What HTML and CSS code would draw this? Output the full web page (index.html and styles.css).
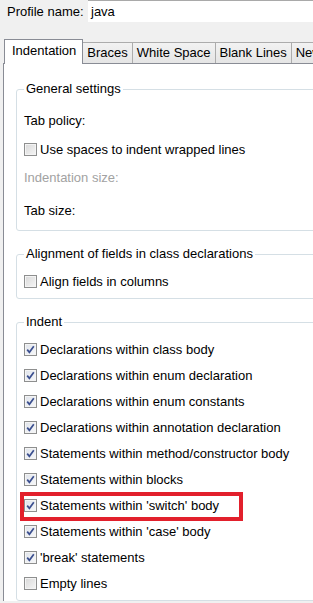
FILE: index.html
```html
<!DOCTYPE html>
<html>

<head>
  <title>Formatter Profile</title>
  <meta name="viewport" content="width=device-width,initial-scale=1">
  <link rel="stylesheet" href="styles.css">
</head>

<body>
  <div class="profile">
    <span class="profile__label">Profile name:</span>
    <span class="profile__input">java</span>
  </div>

  <div class="tabs">
    <span class="tab active">Indentation</span>
    <span class="tab">Braces</span>
    <span class="tab">White Space</span>
    <span class="tab">Blank Lines</span>
    <span class="tab">New Lines</span>
  </div>

  <div class="pane">
    <fieldset class="group group--general">
      <legend>General settings</legend>
      <div class="row row--policy">Tab policy:</div>
      <div class="row row--spaces"><span class="box"></span>Use spaces to indent wrapped lines</div>
      <div class="row row--size disabled">Indentation size:</div>
      <div class="row row--tabsize">Tab size:</div>
    </fieldset>

    <fieldset class="group group--align">
      <legend>Alignment of fields in class declarations</legend>
      <div class="row"><span class="box"></span>Align fields in columns</div>
    </fieldset>

    <fieldset class="group group--indent">
      <legend>Indent</legend>
      <div class="row"><span class="box checked"></span>Declarations within class body</div>
      <div class="row"><span class="box checked"></span>Declarations within enum declaration</div>
      <div class="row"><span class="box checked"></span>Declarations within enum constants</div>
      <div class="row"><span class="box checked"></span>Declarations within annotation declaration</div>
      <div class="row"><span class="box checked"></span>Statements within method/constructor body</div>
      <div class="row"><span class="box checked"></span>Statements within blocks</div>
      <div class="row marked"><span class="box checked"></span>Statements within 'switch' body</div>
      <div class="row"><span class="box checked"></span>Statements within 'case' body</div>
      <div class="row"><span class="box checked"></span>'break' statements</div>
      <div class="row"><span class="box"></span>Empty lines</div>
    </fieldset>
  </div>

  <script>
    // tick glyph for the checked boxes
    const tick = '<svg width="9" height="9" viewBox="0 0 9 9"><path d="M1.2 4.6 L3.4 7.3 L7.8 1.3" fill="none" stroke="#3b4f8f" stroke-width="1.7"/></svg>'
    document.querySelectorAll('.box.checked').forEach(function(box){
      box.innerHTML = tick
    })
  </script>
</body>

</html>
```

FILE: styles.css
```css
body {
  margin: 0;
  background: #f0f0f0;
  color: #000;
  font-family: 'Liberation Sans', Arial, sans-serif;
  font-size: 13px;
  overflow: hidden;
}

.profile {
  display: flex;
  height: 22px;
  align-items: stretch;
}

.profile__label {
  padding-left: 7px;
  width: 81px;
  line-height: 23px;
}

.profile__input {
  flex: 1;
  background: #fff;
  border-top: 1px solid #a9a9a9;
  padding-left: 3px;
  line-height: 21px;
}

.tabs {
  display: flex;
  align-items: flex-end;
  margin-top: 17px;
  padding-left: 4px;
  height: 24px;
  white-space: nowrap;
}

.tab {
  box-sizing: border-box;
  height: 21px;
  padding: 0 4px;
  line-height: 20px;
  border: 1px solid #acacac;
  border-bottom: none;
  border-left: none;
  background: linear-gradient(to bottom, #f2f2f2, #e5e5e5);
}

.tab.active {
  position: relative;
  z-index: 1;
  height: 25px;
  margin-bottom: -1px;
  padding: 0 6px 0 7px;
  line-height: 22px;
  border: 1px solid #898c95;
  border-bottom: none;
  background: #fff;
}

.pane {
  width: 400px;
  margin-left: 3px;
  padding: 17px 0 0 12px;
  background: #fff;
  border-top: 1px solid #898c95;
  border-left: 1px solid #898c95;
}

.group {
  margin: 0;
  padding: 0 7px 5px;
  border: 1px solid #d5dfe5;
  border-radius: 3px;
}

.group legend {
  padding: 0 2px;
  line-height: 16px;
}

.group--general {
  padding-bottom: 8px;
}

.group--align,
.group--indent {
  margin-top: 15px;
}

.row {
  display: flex;
  align-items: center;
  height: 24px;
  margin-top: 2px;
  position: relative;
}

.group--align .row:first-of-type,
.group--indent .row:first-of-type {
  margin-top: 7px;
}

.row--policy {
  margin-top: 11px;
}

.row--spaces {
  margin-top: 5px;
}

.row--size {
  margin-top: 4px;
}

.row--tabsize {
  margin-top: 9px;
}

.disabled {
  color: #a2a2a2;
}

.box {
  box-sizing: border-box;
  width: 13px;
  height: 13px;
  margin-right: 3px;
  border: 1px solid #8e8f8f;
  background: linear-gradient(135deg, #d8d8d8, #f6f6f6);
  box-shadow: inset 0 0 0 1px #f4f4f4;
  display: flex;
  align-items: center;
  justify-content: center;
  flex-shrink: 0;
}

.box.checked {
  background: linear-gradient(135deg, #dfe3ea, #f7f8fa);
}

/* red highlight round the 'switch' option */
.marked::after {
  content: '';
  position: absolute;
  left: -4px;
  top: -1px;
  width: 223px;
  height: 29px;
  box-sizing: border-box;
  border: 4px solid #e2202c;
}
```
